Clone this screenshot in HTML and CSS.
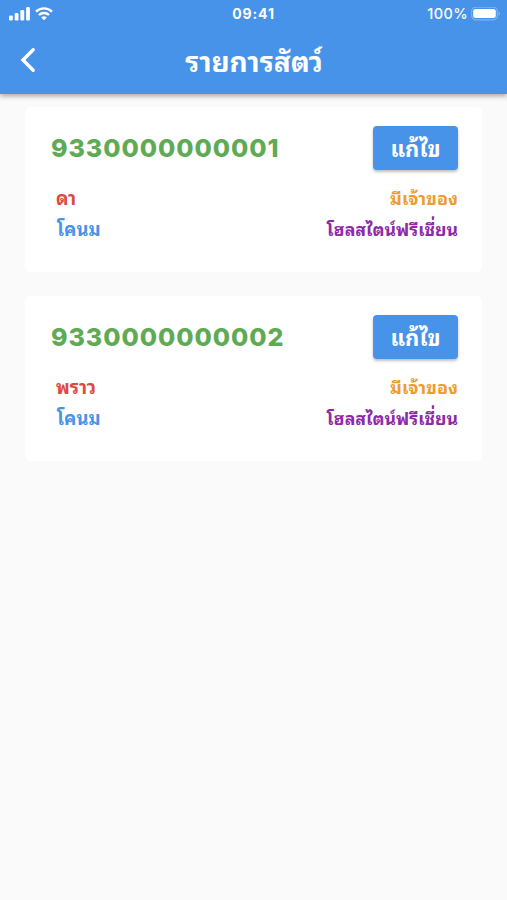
FILE: index.html
```html
<!DOCTYPE html>
<html lang="th">
  <head>
    <meta charset="utf-8">
    <meta name="viewport" content="width=device-width, initial-scale=1">
    <title>รายการสัตว์</title>
    <link rel="stylesheet" href="styles.css">
  </head>
  <body>
    <header class="header">
      <div class="status">
        <div class="left">
          <svg class="signal" width="21" height="14" viewBox="0 0 21 14">
            <rect x="0" y="8.5" width="3.8" height="5" rx="1.2"/>
            <rect x="5.7" y="6" width="3.8" height="7.5" rx="1.2"/>
            <rect x="11.4" y="3" width="3.8" height="10.5" rx="1.2"/>
            <rect x="17.1" y="0" width="3.8" height="13.5" rx="1.2"/>
          </svg>
          <svg class="wifi" width="18" height="14" viewBox="0 0 18 14">
            <path d="M1 4.7A11.5 11.5 0 0 1 17 4.7M4 8A7.2 7.2 0 0 1 14 8" fill="none" stroke="#fff" stroke-width="2.3"/>
            <path d="M6.2 10.4Q9 8.3 11.8 10.4L9 13.3Z"/>
          </svg>
        </div>
        <div class="clock">09:41</div>
        <div class="right">
          <span>100%</span>
          <svg class="battery" width="30" height="14" viewBox="0 0 30 14">
            <rect x=".7" y=".2" width="25.6" height="12.6" rx="4" fill="none" stroke="#fff" stroke-opacity=".3" stroke-width="1.2"/>
            <rect x="2.2" y="2" width="22.6" height="9" rx="2.5"/>
            <path d="M27.7 4.4Q30 6.5 27.7 8.6Z" opacity=".4"/>
          </svg>
        </div>
      </div>
      <div class="bar">
        <svg class="back" width="16" height="26" viewBox="0 0 16 26">
          <path d="M13.2 2.8L3 13L13.2 23.2" fill="none" stroke="#fff" stroke-width="3.4" stroke-linecap="round"/>
        </svg>
        <h1>รายการสัตว์</h1>
      </div>
    </header>
    <main class="list">
      <section class="card">
        <div class="top">
          <div class="tag">9330000000001</div>
          <button>แก้ไข</button>
        </div>
        <div class="row"><span class="name">ดา</span><span class="owner">มีเจ้าของ</span></div>
        <div class="row"><span class="type">โคนม</span><span class="breed">โฮลสไตน์ฟรีเชี่ยน</span></div>
      </section>
      <section class="card">
        <div class="top">
          <div class="tag">9330000000002</div>
          <button>แก้ไข</button>
        </div>
        <div class="row"><span class="name">พราว</span><span class="owner">มีเจ้าของ</span></div>
        <div class="row"><span class="type">โคนม</span><span class="breed">โฮลสไตน์ฟรีเชี่ยน</span></div>
      </section>
    </main>
  </body>
</html>
```
FILE: styles.css
```css
* {
  box-sizing: border-box;
}
body {
  margin: 0;
  min-height: 900px;
  background: #fafafa;
  font-family: Inter, "Noto Sans Thai Looped", Loma, Garuda, Waree, "Noto Sans", sans-serif;
}
.header {
  height: 94px;
  background: #4793e9;
  color: #fff;
  box-shadow: 0 2px 5px rgba(0, 0, 0, .35);
}
.header svg {
  fill: #fff;
}
.status {
  height: 27px;
  display: grid;
  grid-template-columns: 1fr auto 1fr;
  align-items: center;
  font-size: 14px;
  font-weight: 600;
}
.left, .right {
  display: flex;
  align-items: center;
  gap: 5px;
}
.left {
  padding-left: 9px;
}
.right {
  justify-content: flex-end;
  gap: 3px;
  padding-right: 6px;
  font-size: 14.5px;
  font-weight: 500;
  letter-spacing: .4px;
}
.clock {
  font-weight: 700;
  letter-spacing: .9px;
}
.bar {
  height: 66px;
  display: grid;
  grid-template-columns: 40px 1fr 40px;
  align-items: center;
}
.back {
  margin-left: 20px;
}
h1 {
  margin: 0;
  padding-bottom: 1px;
  padding-left: 1px;
  text-align: center;
  font-size: 28px;
}
.list {
  padding: 13px 25px 0;
}
.card {
  height: 165px;
  padding: 19px 24px 0 26px;
  margin-bottom: 24px;
  background: #fff;
  border-radius: 6px;
}
.top {
  height: 44px;
  display: flex;
  align-items: center;
  justify-content: space-between;
}
.tag {
  color: #5fab55;
  font-size: 25px;
  font-weight: 800;
  letter-spacing: .95px;
  white-space: nowrap;
}
button {
  width: 85px;
  height: 44px;
  padding: 0 0 2px;
  border: 0;
  border-radius: 4px;
  background: #4793e9;
  color: #fff;
  font-family: inherit;
  font-size: 22px;
  font-weight: bold;
  box-shadow: 0 2px 3px rgba(0, 0, 0, .25);
}
.row {
  height: 31px;
  display: flex;
  align-items: center;
  justify-content: space-between;
  padding-left: 5px;
  font-size: 18.4px;
  font-weight: bold;
}
.top + .row {
  margin-top: 11px;
}
.name {
  color: #dc4b3e;
}
.owner {
  color: #ee9c32;
  font-size: 18px;
}
.type {
  padding-left: 1px;
  color: #4793e9;
}
.breed {
  color: #8e2aa8;
  font-size: 17.7px;
}
```
